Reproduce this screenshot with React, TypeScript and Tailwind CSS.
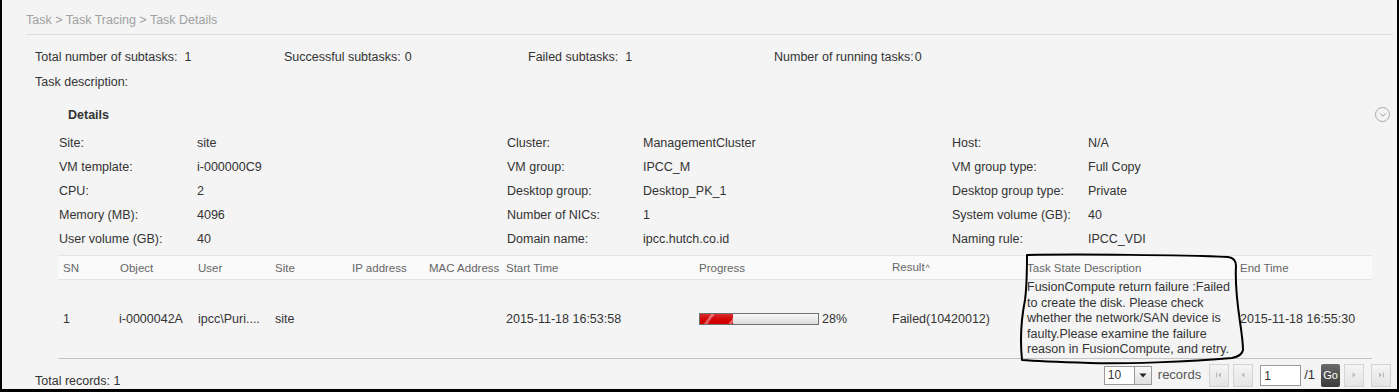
import { ChevronDown } from "lucide-react"

const summary = [
  { label: "Total number of subtasks:", value: "1", w: "w-[249px]", gap: "ml-[7px]" },
  { label: "Successful subtasks:", value: "0", w: "w-[244px]", gap: "ml-[4px]" },
  { label: "Failed subtasks:", value: "1", w: "w-[246px]", gap: "ml-[7px]" },
  { label: "Number of running tasks:", value: "0", w: "w-[200px]", gap: "ml-[1px]" },
]

const details = [
  ["Site:", "site", "Cluster:", "ManagementCluster", "Host:", "N/A"],
  ["VM template:", "i-000000C9", "VM group:", "IPCC_M", "VM group type:", "Full Copy"],
  ["CPU:", "2", "Desktop group:", "Desktop_PK_1", "Desktop group type:", "Private"],
  ["Memory (MB):", "4096", "Number of NICs:", "1", "System volume (GB):", "40"],
  ["User volume (GB):", "40", "Domain name:", "ipcc.hutch.co.id", "Naming rule:", "IPCC_VDI"],
]

const cols = [
  { name: "SN", w: "w-[57px]" },
  { name: "Object", w: "w-[78px]" },
  { name: "User", w: "w-[77px]" },
  { name: "Site", w: "w-[77px]" },
  { name: "IP address", w: "w-[77px]" },
  { name: "MAC Address", w: "w-[77px]" },
  { name: "Start Time", w: "w-[193px]" },
  { name: "Progress", w: "w-[193px]" },
  { name: "Result", w: "w-[135px]" },
  { name: "Task State Description", w: "w-[213px]" },
  { name: "End Time", w: "w-[137px]" },
]

const description = [
  "FusionCompute return failure :Failed",
  "to create the disk. Please check",
  "whether the network/SAN device is",
  "faulty.Please examine the failure",
  "reason in FusionCompute, and retry.",
]

function PagerButton({ dir }: { dir: "first" | "prev" | "next" | "last" }) {
  return (
    <div className="flex h-[23px] w-[20px] items-center justify-center border border-[#d4d4d4] bg-gradient-to-b from-[#f4f4f4] to-[#e4e4e4]">
      <svg width="8" height="8" viewBox="0 0 8 8">
        {dir === "first" && (
          <>
            <rect x="1" y="1.5" width="1" height="5" fill="#b8b8b8" />
            <path d="M6 1.5 L3 4 L6 6.5 Z" fill="#b8b8b8" />
          </>
        )}
        {dir === "prev" && <path d="M5.5 1.5 L2.5 4 L5.5 6.5 Z" fill="#b8b8b8" />}
        {dir === "next" && <path d="M2.5 1.5 L5.5 4 L2.5 6.5 Z" fill="#b8b8b8" />}
        {dir === "last" && (
          <>
            <path d="M2 1.5 L5 4 L2 6.5 Z" fill="#b8b8b8" />
            <rect x="6" y="1.5" width="1" height="5" fill="#b8b8b8" />
          </>
        )}
      </svg>
    </div>
  )
}

export default function App() {
  return (
    <div className="relative h-[392px] w-[1399px] overflow-hidden border-b-[3px] border-l-2 border-r-2 border-black bg-[#f4f4f4] font-['Liberation_Sans',Arial,sans-serif] text-[12.5px] leading-[14px] text-[#333]">
      {/* breadcrumb */}
      <div className="ml-[24px] mr-[4px] h-[35px] border-b border-[#dcdcdc] pt-[13px] text-[12.5px] text-[#a0a0a0]">
        Task &gt; Task Tracing &gt; Task Details
      </div>

      {/* summary */}
      <div className="mt-[15px] flex pl-[33px]">
        {summary.map((s) => (
          <div key={s.label} className={s.w}>
            {s.label}
            <span className={s.gap}>{s.value}</span>
          </div>
        ))}
      </div>
      <div className="mt-[11px] pl-[33px]">Task description:</div>

      {/* details header */}
      <div className="mt-[18px] flex items-center pl-[66px] pr-[7px]">
        <div className="flex-1 font-bold">Details</div>
        <div className="flex h-[15px] w-[15px] items-center justify-center rounded-full border border-[#a8a8a8]">
          <ChevronDown size={10} strokeWidth={2} className="text-[#888]" />
        </div>
      </div>

      {/* details grid */}
      <div className="mt-[9px] pl-[57px]">
        {details.map((r) => (
          <div key={r[0]} className="flex h-[24px] items-center">
            <div className="w-[138px]">{r[0]}</div>
            <div className="w-[310px]">{r[1]}</div>
            <div className="w-[136px]">{r[2]}</div>
            <div className="w-[309px]">{r[3]}</div>
            <div className="w-[136px]">{r[4]}</div>
            <div>{r[5]}</div>
          </div>
        ))}
      </div>

      {/* table */}
      <div className="ml-[56px] mt-[4px] w-[1314px]">
        <div className="flex h-[25px] items-center border-y border-[#e4e4e4] bg-[#fafafa] text-[11.5px] text-[#666]">
          {cols.map((c) => (
            <div key={c.name} className={`${c.w} pl-[5px]`}>
              {c.name}
              {c.name === "Result" && <span className="ml-[1px] text-[9px]">^</span>}
            </div>
          ))}
        </div>
        <div className="flex h-[79px] items-center border-b border-[#c4c4c4]">
          <div className="w-[57px] pl-[5px]">1</div>
          <div className="w-[78px] pl-[4px]">i-0000042A</div>
          <div className="w-[77px] pl-[5px]">ipcc\Puri....</div>
          <div className="w-[77px] pl-[5px]">site</div>
          <div className="w-[77px]" />
          <div className="w-[77px]" />
          <div className="w-[193px] pl-[5px]">2015-11-18 16:53:58</div>
          <div className="flex w-[193px] items-center pl-[5px]">
            <div className="h-[12px] w-[120px] border border-[#707070] bg-gradient-to-b from-[#f8f8f8] to-[#dcdcdc]">
              <div className="h-full w-[28%] bg-[linear-gradient(to_bottom,rgba(255,255,255,0.18),rgba(255,255,255,0)_60%),repeating-linear-gradient(125deg,#d20000_0px,#d20000_9px,#e25a5a_9px,#e25a5a_12px,#d20000_12px,#d20000_20px)]" />
            </div>
            <span className="ml-[3px]">28%</span>
          </div>
          <div className="w-[135px] pl-[5px]">Failed(10420012)</div>
          <div className="w-[213px] pl-[5px] leading-[15.6px]">
            {description.map((l) => (
              <div key={l} className="whitespace-nowrap">
                {l}
              </div>
            ))}
          </div>
          <div className="w-[137px] pl-[5px]">2015-11-18 16:55:30</div>
        </div>
      </div>

      {/* footer */}
      <div className="flex h-[32px] items-center pl-[33px] pr-[6px]">
        <div className="mt-[12px] flex-1">Total records: 1</div>
        <div className="flex items-center">
          <div className="flex h-[19px] w-[48px] items-center border border-[#9a9a9a] bg-white">
            <span className="flex-1 pl-[3px] text-[12px] leading-[12px]">10</span>
            <div className="flex h-[17px] w-[17px] items-center justify-center border-l border-[#9a9a9a] bg-gradient-to-b from-[#fafafa] to-[#dedede]">
              <svg width="8" height="5" viewBox="0 0 8 5">
                <path d="M0.5 0.5 L7.5 0.5 L4 4.5 Z" fill="#222" />
              </svg>
            </div>
          </div>
          <span className="ml-[6px] mr-[8px] text-[13px] text-[#555]">records</span>
          <PagerButton dir="first" />
          <div className="ml-[4px]">
            <PagerButton dir="prev" />
          </div>
          <div className="ml-[7px] h-[21px] w-[41px] border border-[#9a9a9a] bg-white pl-[3px] pt-[3px] text-[12px]">
            1
          </div>
          <span className="ml-[3px] mr-[6px] text-[13px]">/1</span>
          <div className="flex h-[23px] w-[19px] items-center justify-center rounded-[2px] bg-gradient-to-b from-[#6a6a6a] to-[#3a3a3a] text-[11px] text-white">
            Go
          </div>
          <div className="ml-[4px]">
            <PagerButton dir="next" />
          </div>
          <div className="ml-[7px]">
            <PagerButton dir="last" />
          </div>
        </div>
      </div>

      {/* hand-drawn annotation over the description cell */}
      <svg
        className="pointer-events-none absolute left-[-2px] top-0"
        width="1399"
        height="392"
        viewBox="0 0 1399 392"
      >
        <path
          d="M1027 255 C1080 254 1180 255 1228 257 Q1236 258 1236 266 C1234 300 1243 330 1243 350 Q1242 356 1232 358 C1190 362 1120 364 1090 363 C1060 362 1035 361 1022 360 C1020 340 1021 320 1025 300 C1027 285 1027 270 1027 255 Z"
          fill="none"
          stroke="#000"
          strokeWidth="2"
          strokeLinejoin="round"
        />
      </svg>
    </div>
  )
}
